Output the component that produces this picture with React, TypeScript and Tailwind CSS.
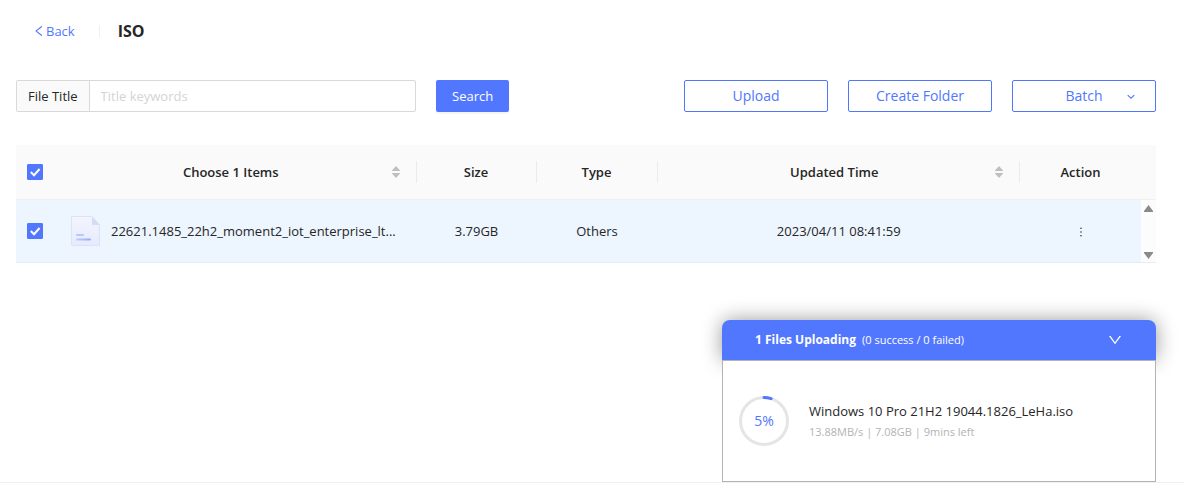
import React, { useState } from "react";
import { AiOutlineDown, AiOutlineLeft, AiOutlineMore } from "react-icons/ai";

interface FileItem {
  id: number;
  name: string;
  size: string;
  type: string;
  updatedAt: string;
}

const files: FileItem[] = [
  {
    id: 1,
    name: "22621.1485_22h2_moment2_iot_enterprise_lt...",
    size: "3.79GB",
    type: "Others",
    updatedAt: "2023/04/11 08:41:59",
  },
];

interface CheckboxProps {
  label: string;
  checked: boolean;
  onChange: (checked: boolean) => void;
}

const Checkbox: React.FC<CheckboxProps> = ({ label, checked, onChange }) => (
  <label className="relative mx-auto block h-4 w-4 cursor-pointer">
    <input
      type="checkbox"
      aria-label={label}
      checked={checked}
      onChange={(e) => onChange(e.target.checked)}
      className="block h-4 w-4 appearance-none rounded-[1px] border border-[#d9d9d9] bg-white checked:border-[#5277ff] checked:bg-[#5277ff]"
    />
    {checked && (
      <svg viewBox="0 0 16 16" className="pointer-events-none absolute inset-0 h-4 w-4">
        <path d="M3.8 8 L7 11.2 L12.6 5" fill="none" stroke="#fff" strokeWidth="2" />
      </svg>
    )}
  </label>
);

const Sorter: React.FC<{ label: string }> = ({ label }) => (
  <button type="button" aria-label={label} className="block">
    <svg viewBox="0 0 8 12" className="h-3 w-2" fill="#bfbfbf">
      <path d="M4 0 L8 4.5 V5 H0 V4.5 Z" />
      <path d="M4 12 L8 7.5 V7 H0 V7.5 Z" />
    </svg>
  </button>
);

const FileIcon: React.FC = () => (
  <svg viewBox="0 0 30 30" className="h-[30px] w-[30px] shrink-0">
    <defs>
      <linearGradient id="paper" x1="0" y1="0" x2="0" y2="1">
        <stop offset="0" stopColor="#f3f5fe" />
        <stop offset="1" stopColor="#e6eafd" />
      </linearGradient>
      <linearGradient id="line" x1="0" y1="0" x2="1" y2="0">
        <stop offset="0" stopColor="#c3cefb" />
        <stop offset="1" stopColor="#91a7fb" />
      </linearGradient>
    </defs>
    <path d="M.5 .5 H21 L28.5 8.5 V29.5 H.5 Z" fill="url(#paper)" stroke="#dde2f5" />
    <path d="M21 .5 L29 9 H22 Q21 9 21 8 Z" fill="#d6dcf1" />
    <rect x="5" y="18" width="8" height="2" rx="1" fill="#b9c6fa" />
    <rect x="5" y="22.5" width="15" height="2" rx="1" fill="url(#line)" />
  </svg>
);

const ProgressRing: React.FC<{ percent: number }> = ({ percent }) => (
  <div className="relative h-[50px] w-[50px] shrink-0">
    <svg viewBox="0 0 50 50" className="h-full w-full -rotate-90">
      <circle cx="25" cy="25" r="23.5" fill="none" stroke="#e5e5e5" strokeWidth="3" />
      <circle
        cx="25"
        cy="25"
        r="23.5"
        fill="none"
        stroke="#5277ff"
        strokeWidth="3"
        strokeLinecap="round"
        pathLength={100}
        strokeDasharray={`${percent} 100`}
      />
    </svg>
    <span className="absolute inset-0 flex items-center justify-center text-sm text-[#5277ff]">{percent}%</span>
  </div>
);

const outlineButton =
  "h-8 w-36 rounded-xs border border-[#5277ff] bg-white text-sm text-[#5277ff] hover:bg-[#f5f7ff]";

const App: React.FC = () => {
  const [keyword, setKeyword] = useState("");
  const [selected, setSelected] = useState<number[]>([1]);
  const [isOpen, setIsOpen] = useState(true);

  const toggle = (id: number, checked: boolean) => {
    setSelected(checked ? [...selected, id] : selected.filter((item) => item !== id));
  };

  return (
    <div className="flex min-h-screen flex-col bg-white font-['Open_Sans','Noto_Sans',sans-serif] text-[13px] leading-[22px] text-[#262626]">
      <main className="relative flex-1 pr-7 pl-4">
        {/* Title */}
        <header className="flex h-[62px] items-center pl-4">
          <a href="#" className="flex items-center text-[#5277ff]">
            <AiOutlineLeft className="h-3.5 w-3.5" />
            Back
          </a>
          <span className="mr-[18px] ml-6 h-3 w-px bg-[#f0f0f0]" />
          <h1 className="text-base font-bold">ISO</h1>
        </header>

        {/* Search and actions */}
        <div className="flex items-center justify-between gap-5 pt-[18px]">
          <form className="flex items-center gap-5" onSubmit={(e) => e.preventDefault()}>
            <div className="flex h-8 w-[400px] overflow-hidden rounded-xs border border-[#d9d9d9]">
              <label
                htmlFor="file-title"
                className="flex shrink-0 items-center border-r border-[#d9d9d9] bg-[#fafafa] px-[11px]"
              >
                File Title
              </label>
              <input
                id="file-title"
                type="text"
                placeholder="Title keywords"
                value={keyword}
                onChange={(e) => setKeyword(e.target.value)}
                className="min-w-0 flex-1 px-[11px] placeholder-[#d4d4d4] outline-none"
              />
            </div>
            <button type="submit" className="h-8 rounded-xs bg-[#5277ff] px-4 text-white shadow-[0_2px_0_rgba(0,0,0,0.04)]">
              Search
            </button>
          </form>
          <div className="flex gap-5">
            <button type="button" className={outlineButton}>
              Upload
            </button>
            <button type="button" className={outlineButton}>
              Create Folder
            </button>
            <button type="button" aria-haspopup="menu" className={`${outlineButton} relative`}>
              Batch
              <svg viewBox="0 0 8 8" className="absolute top-3 right-5 h-2 w-2">
                <path d="M.7 2.2 L4 5.2 L7.3 2.2" fill="none" stroke="currentColor" strokeWidth="1.1" />
              </svg>
            </button>
          </div>
        </div>

        {/* File list */}
        <table className="mt-[33px] w-full table-fixed border-collapse text-center">
          <colgroup>
            <col className="w-[38px]" />
            <col />
            <col className="w-[120px]" />
            <col className="w-[121px]" />
            <col />
            <col className="w-[121px]" />
            <col className="w-[15px]" />
          </colgroup>
          <thead>
            <tr className="h-[54px] border-b border-[#f0f0f0] bg-[#fafafa]">
              <th>
                <Checkbox
                  label="Select all"
                  checked={selected.length === files.length}
                  onChange={(checked) => setSelected(checked ? files.map((file) => file.id) : [])}
                />
              </th>
              <th className="font-semibold">
                <div className="flex h-[22px] items-center border-r border-[#ebebeb] px-4">
                  <span className="flex-1">Choose {selected.length} Items</span>
                  <Sorter label="Sort by name" />
                </div>
              </th>
              <th className="font-semibold">
                <div className="h-[22px] border-r border-[#ebebeb]">Size</div>
              </th>
              <th className="font-semibold">
                <div className="h-[22px] border-r border-[#ebebeb]">Type</div>
              </th>
              <th className="font-semibold">
                <div className="flex h-[22px] items-center border-r border-[#ebebeb] px-4">
                  <span className="flex-1">Updated Time</span>
                  <Sorter label="Sort by updated time" />
                </div>
              </th>
              <th className="font-semibold">Action</th>
              <th />
            </tr>
          </thead>
          <tbody>
            {files.map((file) => (
              <tr key={file.id} className="h-[63px] border-b border-[#e4ecf8] bg-[#edf5ff]">
                <td>
                  <Checkbox
                    label={`Select ${file.name}`}
                    checked={selected.includes(file.id)}
                    onChange={(checked) => toggle(file.id, checked)}
                  />
                </td>
                <td>
                  <div className="flex items-center gap-2.5 pl-[17px]">
                    <FileIcon />
                    <span className="whitespace-nowrap">{file.name}</span>
                  </div>
                </td>
                <td>{file.size}</td>
                <td>{file.type}</td>
                <td>{file.updatedAt}</td>
                <td>
                  <button type="button" aria-label="More actions" className="align-middle">
                    <AiOutlineMore className="h-3.5 w-3.5" />
                  </button>
                </td>
                <td className="bg-[#fcfcfc]">
                  {/* Scroll arrows */}
                  <svg viewBox="0 0 15 62" className="block h-[62px] w-[15px]" fill="#8a8a8a">
                    <path d="M7.5 5 L12 11 V12 H3 V11 Z" />
                    <path d="M7.5 59 L12 53 V52 H3 V53 Z" />
                  </svg>
                </td>
              </tr>
            ))}
          </tbody>
        </table>

        {/* Upload progress */}
        <section className="absolute right-7 bottom-0 w-[434px] max-w-full">
          <div className="flex h-10 items-center rounded-t-lg bg-[#5277ff] pr-[33px] pl-[33px] text-white shadow-[0_0_20px_rgba(0,0,0,0.4)]">
            <strong className="text-xs font-bold">1 Files Uploading</strong>
            <span className="ml-1.5 text-[11px]">(0 success / 0 failed)</span>
            <button
              type="button"
              aria-label="Toggle upload list"
              aria-expanded={isOpen}
              onClick={() => setIsOpen(!isOpen)}
              className="ml-auto"
            >
              <AiOutlineDown className="h-4 w-4" />
            </button>
          </div>
          {isOpen && (
            <div className="relative flex h-[122px] items-center gap-5 border border-[#b3b3b3] bg-white px-4">
              <ProgressRing percent={5} />
              <div>
                <p>Windows 10 Pro 21H2 19044.1826_LeHa.iso</p>
                <p className="text-[11px] leading-5 text-[#b3b3b3]">13.88MB/s | 7.08GB | 9mins left</p>
              </div>
            </div>
          )}
        </section>
      </main>
      <footer className="h-[19px] border-t border-[#f0f0f0]" />
    </div>
  );
};

export default App;
